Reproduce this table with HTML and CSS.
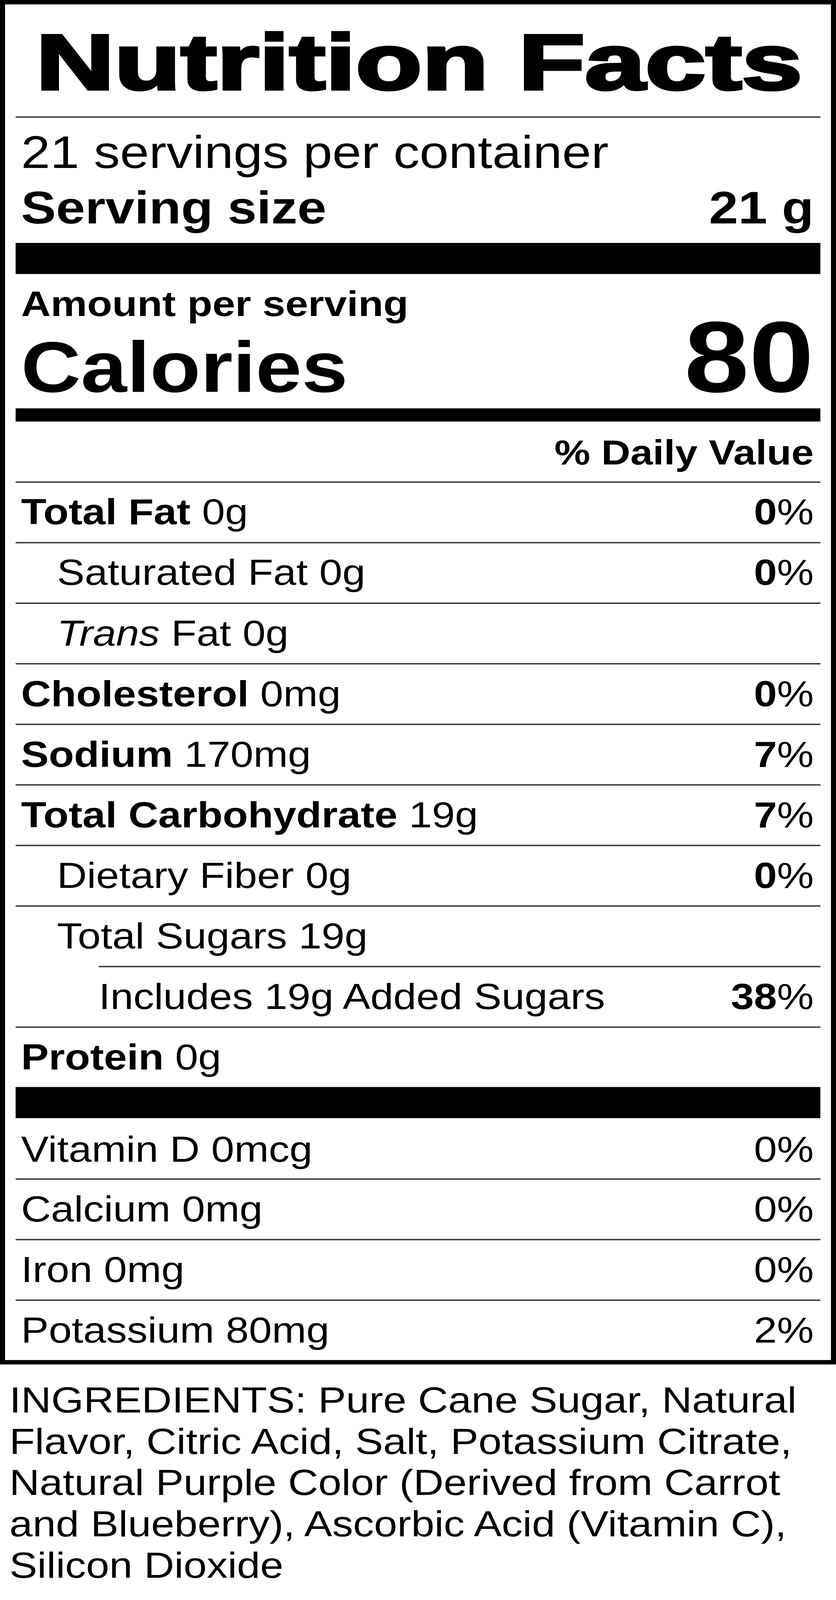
FILE: index.html
```html
<!DOCTYPE html>
<html lang="en">
<head>
<meta charset="utf-8">
<title>Nutrition Facts</title>
<link rel="stylesheet" href="styles.css">
</head>
<body>
<main class="page">
  <section class="label">
    <h1 class="title"><span>Nutrition Facts</span></h1>
    <div class="rule-thin"></div>
    <div class="servings">
      <div>21 servings per container</div>
      <div class="serving-size"><span>Serving size</span><span>21 g</span></div>
    </div>
    <div class="bar-thick"></div>
    <div class="amount">
      <div class="amount-label">Amount per serving</div>
      <div class="calories"><span class="calories-label">Calories</span><span class="calories-value">80</span></div>
    </div>
    <div class="bar-medium"></div>
    <div class="dv-head">% Daily Value</div>
    <div class="row"><span><b>Total Fat</b> 0g</span><span><b>0</b>%</span></div>
    <div class="row indent"><span>Saturated Fat 0g</span><span><b>0</b>%</span></div>
    <div class="row indent"><span><i>Trans</i> Fat 0g</span><span></span></div>
    <div class="row"><span><b>Cholesterol</b> 0mg</span><span><b>0</b>%</span></div>
    <div class="row"><span><b>Sodium</b> 170mg</span><span><b>7</b>%</span></div>
    <div class="row"><span><b>Total Carbohydrate</b> 19g</span><span><b>7</b>%</span></div>
    <div class="row indent"><span>Dietary Fiber 0g</span><span><b>0</b>%</span></div>
    <div class="row indent"><span>Total Sugars 19g</span><span></span></div>
    <div class="row sub"><span>Includes 19g Added Sugars</span><span><b>38</b>%</span></div>
    <div class="row"><span><b>Protein</b> 0g</span><span></span></div>
    <div class="bar-thick"></div>
    <div class="row first"><span>Vitamin D 0mcg</span><span>0%</span></div>
    <div class="row"><span>Calcium 0mg</span><span>0%</span></div>
    <div class="row"><span>Iron 0mg</span><span>0%</span></div>
    <div class="row"><span>Potassium 80mg</span><span>2%</span></div>
  </section>
  <p class="ingredients">INGREDIENTS: Pure Cane Sugar, Natural Flavor, Citric Acid, Salt, Potassium Citrate, Natural Purple Color (Derived from Carrot and Blueberry), Ascorbic Acid (Vitamin C), Silicon Dioxide</p>
</main>
</body>
</html>
```

FILE: styles.css
```css
html, body {
  margin: 0;
  padding: 0;
  background: #fff;
}

body {
  font-family: "Liberation Sans", Arial, sans-serif;
  color: #000;
}

/* the window is only 4096px tall: fit the 4729px-tall label into it */
.page {
  transform: scaleY(0.8661);
  transform-origin: 0 0;
  margin-bottom: -640px;
}

.label {
  box-sizing: border-box;
  border: 13px solid #000;
  padding: 0 27px;
}

.title {
  margin: 0;
  padding: 55px 0 44px 52px;
  font-size: 232px;
  line-height: 232px;
  font-weight: 700;
  white-space: nowrap;
}

.title span {
  display: inline-block;
  transform: scaleX(1.199);
  transform-origin: 0 50%;
  -webkit-text-stroke: 8px #000;
}

.rule-thin {
  height: 4px;
  background: #333;
}

.servings {
  padding: 21px 17px 21px 14px;
  font-size: 134px;
  line-height: 164px;
}

.serving-size {
  display: flex;
  justify-content: space-between;
  font-weight: 700;
}

.bar-thick {
  height: 92px;
  background: #000;
}

.amount {
  padding: 25px 17px 16px 14px;
  font-weight: 700;
}

.amount-label {
  font-size: 105px;
  line-height: 126px;
}

.calories {
  display: flex;
  justify-content: space-between;
  align-items: baseline;
  margin-top: 4px;
}

.calories-label {
  font-size: 212px;
  line-height: 212px;
}

.calories-value {
  font-size: 298px;
  line-height: 180px;
}

.bar-medium {
  height: 39px;
  background: #000;
}

.dv-head {
  padding: 30px 17px 23px 14px;
  text-align: right;
  font-size: 103px;
  line-height: 124px;
  font-weight: 700;
}

.row {
  display: flex;
  justify-content: space-between;
  border-top: 4px solid #333;
  padding: 0 17px 3px 14px;
  font-size: 106px;
  line-height: 172px;
  white-space: nowrap;
}

.row.indent {
  padding-left: 106px;
}

.row.sub {
  margin-left: 213px;
  padding-left: 0;
}

.row.first {
  border-top: 0;
  padding-top: 6px;
  padding-bottom: 0;
}

.ingredients {
  margin: 0;
  padding: 44px 24px 0;
  font-size: 107px;
  line-height: 122px;
}
```
